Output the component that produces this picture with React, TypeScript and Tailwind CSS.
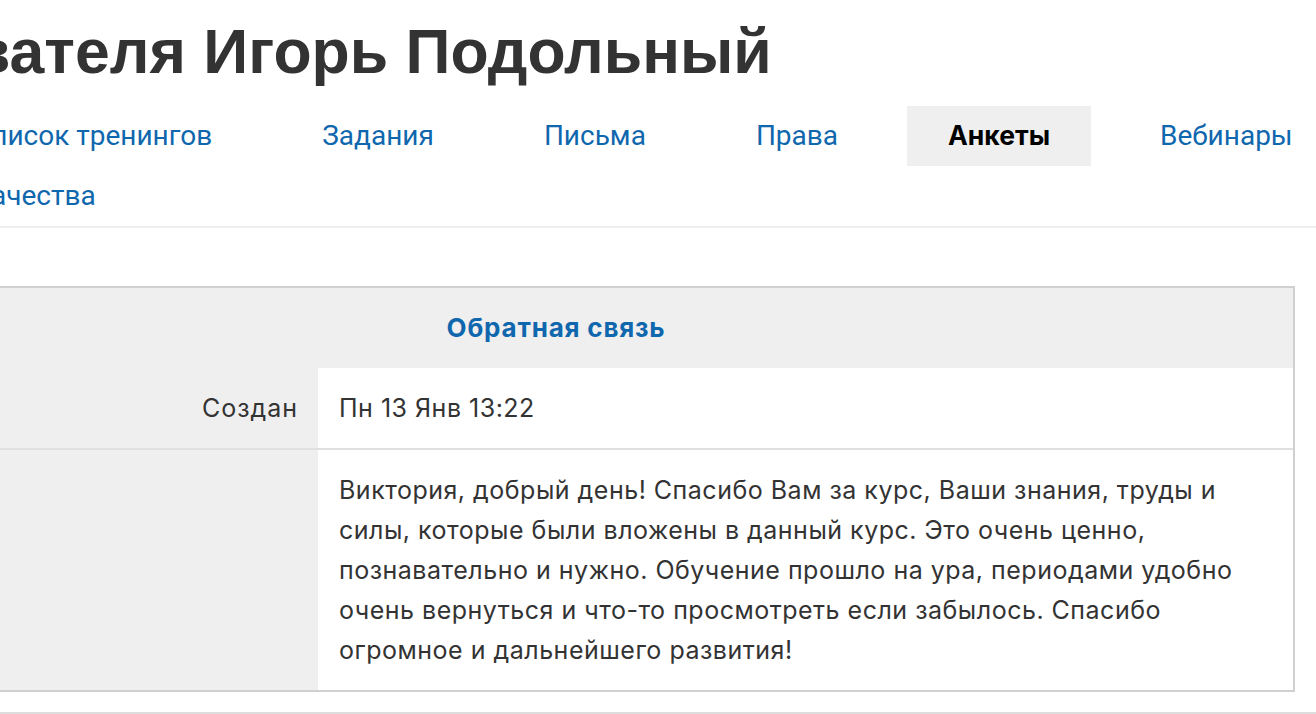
const tabs = [
  { label: "Список тренингов", active: false },
  { label: "Задания", active: false },
  { label: "Письма", active: false },
  { label: "Права", active: false },
  { label: "Анкеты", active: true },
  { label: "Вебинары", active: false },
  { label: "Качества", active: false },
];

export default function App() {
  return (
    <div className="w-[1316px] h-[714px] overflow-hidden bg-white font-['Inter',sans-serif] text-[#333333]">
      <div className="-ml-[183px] w-[1540px]">
        <h1 className="flex pt-[19px] pl-[155px] font-['Liberation_Sans',Arial,sans-serif] text-[62.5px] font-bold leading-[64px] whitespace-nowrap text-[#333333]">
          <span className="flex w-0 justify-end">Анкеты пользо</span>
          <span>вателя Игорь Подольный</span>
        </h1>

        <nav className="mt-[23px] flex flex-wrap gap-x-[28px] pl-[115px] border-b-2 border-[#eeeeee]">
          {tabs.map((t) => (
            <a
              key={t.label}
              href="#"
              className={
                t.active
                  ? "flex h-[60px] items-center px-[41px] bg-[#efefef] font-['Inter',sans-serif] text-[26.5px] font-bold text-black"
                  : "flex h-[60px] items-center px-[41px] font-['Roboto',sans-serif] text-[28px] text-[#0f67ae]"
              }
            >
              {t.label}
            </a>
          ))}
        </nav>

        <div className="mt-[58px] w-[1478px] grid grid-cols-[499px_1fr] border-2 border-[#d0d0d0] text-[25px] tracking-[0.5px] leading-[40px]">
          <div className="col-span-2 flex h-[80px] items-center justify-center bg-[#efefef] text-[26px] tracking-[0.8px] font-bold text-[#0f67ae]">
            Обратная связь
          </div>

          <div className="bg-[#efefef] py-5 pr-5 text-right tracking-[1px]">Создан</div>
          <div className="bg-white py-5 pl-[21px]">Пн 13 Янв 13:22</div>

          <div className="bg-[#efefef] border-t-2 border-[#e0e0e0]"></div>
          <div className="bg-white border-t-2 border-[#e0e0e0] py-5 pl-[21px] pr-5">
            Виктория, добрый день! Спасибо Вам за курс, Ваши знания, труды и силы, которые были
            вложены в данный курс. Это очень ценно, познавательно и нужно. Обучение прошло на ура,
            периодами удобно очень вернуться и что-то просмотреть если забылось. Спасибо огромное и
            дальнейшего развития!
          </div>
        </div>

        <div className="mt-5 border-t-2 border-[#dddddd]"></div>
      </div>
    </div>
  );
}
